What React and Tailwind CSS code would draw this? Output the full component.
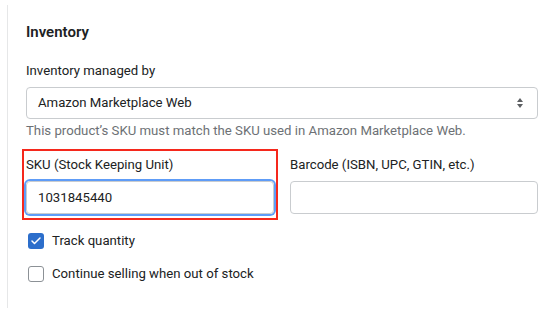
import { Check } from 'lucide-react';

const SelectArrows = () => (
  <svg width="8" height="12" viewBox="0 0 8 12" className="text-[#5c5f62]">
    <path d="M4 1 L7 5 H1 Z" fill="currentColor" />
    <path d="M4 11 L1 7 H7 Z" fill="currentColor" />
  </svg>
);

const Checkbox = ({ checked, label }) => (
  <label className="flex items-center gap-[8px] h-[20px]">
    {checked ? (
      <span className="w-[16px] h-[16px] rounded-[3px] bg-[#2c6ecb] flex items-center justify-center">
        <Check className="w-[12px] h-[12px] text-white" strokeWidth={3} />
      </span>
    ) : (
      <span className="w-[16px] h-[16px] rounded-[3px] border-[1.5px] border-[#8c9196] bg-white" />
    )}
    <span>{label}</span>
  </label>
);

export default function App() {
  return (
    <div
      className="w-[554px] h-[323px] bg-white text-[13.2px] leading-[20px] text-[#202223] overflow-hidden"
      style={{ fontFamily: 'Roboto, "Liberation Sans", sans-serif' }}
    >
      <div className="ml-[7px] mt-[5px] h-[303px] border-l border-[#e6e7e8] pl-[18px] pr-[16px] pt-[17px]">
        <h2 className="font-semibold text-[15px]">Inventory</h2>

        <div className="mt-[19px]">
          <div>Inventory managed by</div>
          <div className="mt-[6px] h-[32px] border border-[#c9cccf] rounded-[4px] flex items-center justify-between pl-[11px] pr-[13px]">
            <span>Amazon Marketplace Web</span>
            <SelectArrows />
          </div>
          <p className="mt-[2px] text-[#6d7175]">
            This product’s SKU must match the SKU used in Amazon Marketplace Web.
          </p>
        </div>

        <div className="mt-[14px] grid grid-cols-2 gap-[16px]">
          <div className="relative">
            <div className="absolute -left-[4px] -right-[4px] -top-[6px] -bottom-[6px] border-2 border-[#f5281c] pointer-events-none" />
            <div>SKU (Stock Keeping Unit)</div>
            <div className="mt-[6px] h-[33px] border border-[#c9cccf] rounded-[4px] ring-2 ring-[#5e9cf7] flex items-center pl-[11px]">
              1031845440
            </div>
          </div>
          <div>
            <div>Barcode (ISBN, UPC, GTIN, etc.)</div>
            <div className="mt-[6px] h-[33px] border border-[#c9cccf] rounded-[4px] bg-white" />
          </div>
        </div>

        <div className="mt-[17px] flex flex-col gap-[13px] pl-[2px]">
          <Checkbox checked label="Track quantity" />
          <Checkbox label="Continue selling when out of stock" />
        </div>
      </div>
    </div>
  );
}
